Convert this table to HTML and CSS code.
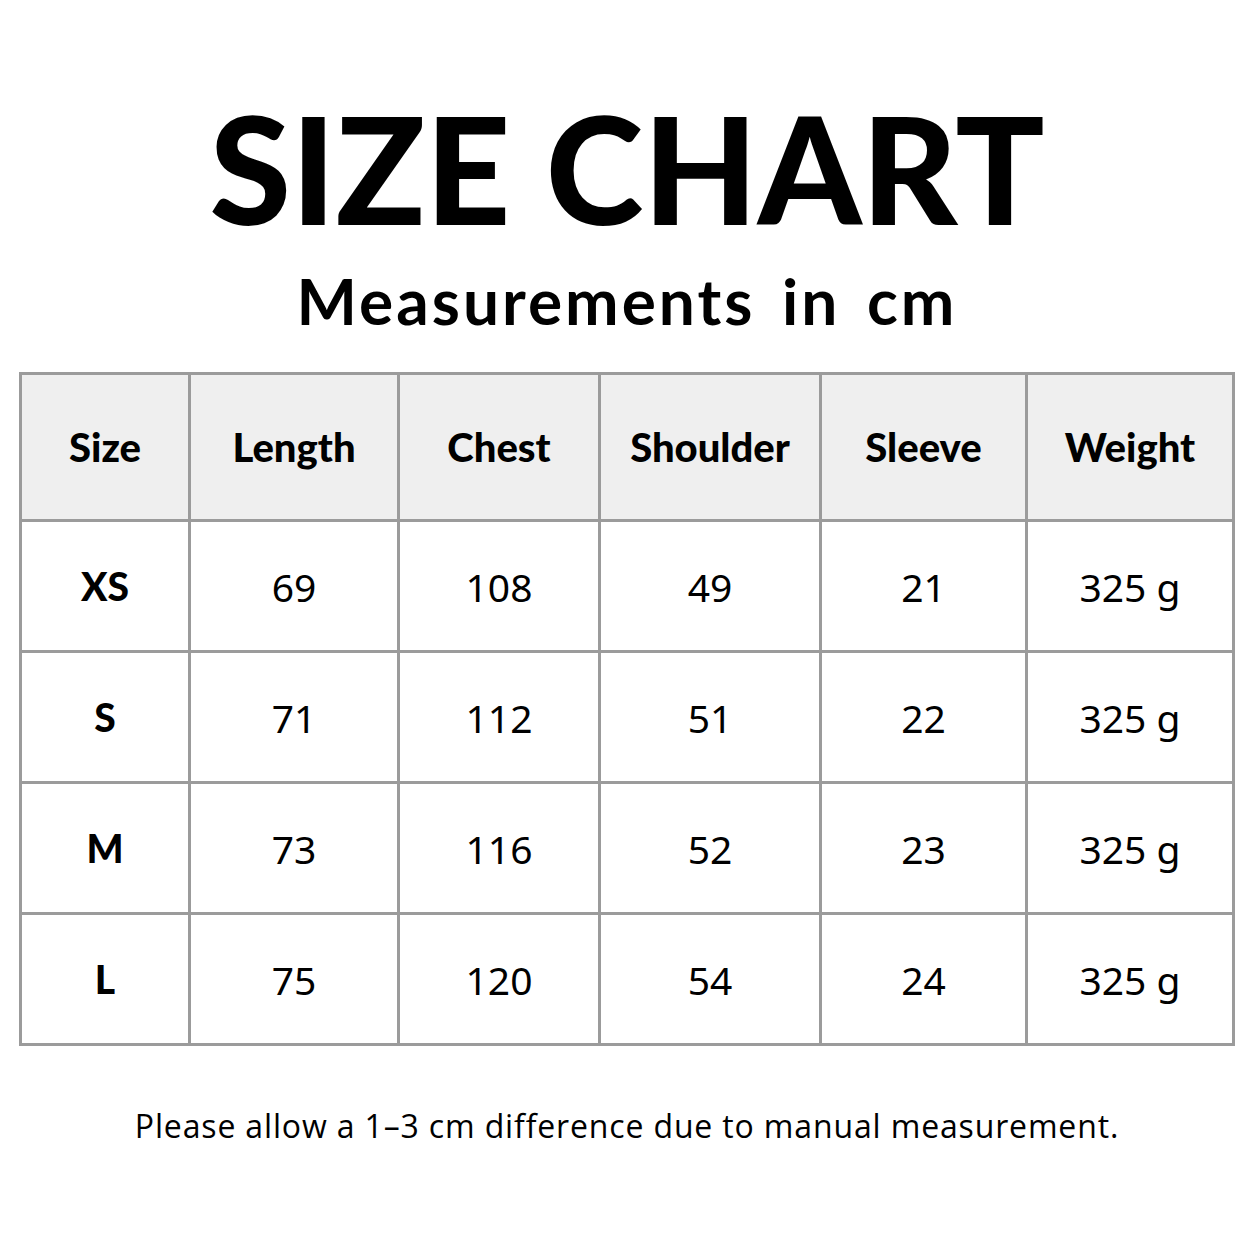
FILE: index.html
```html
<!DOCTYPE html>
<html>
<head>
<meta charset="utf-8">
<link rel="stylesheet" href="styles.css">
</head>
<body>
<div class="page">
  <h1 class="title">SIZE CHART</h1>
  <p class="subtitle">Measurements in cm</p>
  <table class="chart">
    <colgroup>
      <col class="c1"><col class="c2"><col class="c3"><col class="c4"><col class="c5"><col class="c6">
    </colgroup>
    <thead>
      <tr><th>Size</th><th>Length</th><th>Chest</th><th>Shoulder</th><th>Sleeve</th><th>Weight</th></tr>
    </thead>
    <tbody>
      <tr><td class="sz">XS</td><td>69</td><td>108</td><td>49</td><td>21</td><td>325 g</td></tr>
      <tr><td class="sz">S</td><td>71</td><td>112</td><td>51</td><td>22</td><td>325 g</td></tr>
      <tr><td class="sz">M</td><td>73</td><td>116</td><td>52</td><td>23</td><td>325 g</td></tr>
      <tr><td class="sz">L</td><td>75</td><td>120</td><td>54</td><td>24</td><td>325 g</td></tr>
    </tbody>
  </table>
  <p class="note">Please allow a 1–3 cm difference due to manual measurement.</p>
</div>
</body>
</html>
```
FILE: styles.css
```css
html, body {
  margin: 0;
  padding: 0;
  background: #ffffff;
}
.page {
  width: 1254px;
  height: 1254px;
  display: flex;
  flex-direction: column;
  align-items: center;
  color: #000;
  font-family: Lato, "Open Sans", sans-serif;
}
.title {
  margin: 88px 0 0 0;
  font-size: 148px;
  font-weight: 900;
  line-height: 160px;
  letter-spacing: 0;
}
.subtitle {
  margin: 18px 0 0 0;
  font-size: 64px;
  font-weight: 700;
  line-height: 70px;
  letter-spacing: 3px;
  word-spacing: 8px;
}
.chart {
  margin-top: 36px;
  border-collapse: collapse;
  table-layout: fixed;
  width: 1213px;
}
.c1 { width: 169px; }
.c2 { width: 209px; }
.c3 { width: 201px; }
.c4 { width: 221px; }
.c5 { width: 206px; }
.c6 { width: 207px; }
.chart th, .chart td {
  border: 3px solid #9b9b9b;
  text-align: center;
  vertical-align: middle;
  padding: 0;
}
.chart th {
  height: 144px;
  background: #efefef;
  font-weight: 900;
  font-size: 40px;
}
.chart td {
  height: 128px;
  font-family: "Noto Sans", "Open Sans", sans-serif;
  font-size: 39px;
  font-weight: 400;
}
.chart td.sz {
  font-family: Lato, sans-serif;
  font-weight: 900;
  font-size: 39px;
}
.note {
  margin: 60px 0 0 0;
  font-family: "Open Sans", sans-serif;
  font-size: 32px;
  font-weight: 400;
  line-height: 40px;
  letter-spacing: 0.85px;
}
```
